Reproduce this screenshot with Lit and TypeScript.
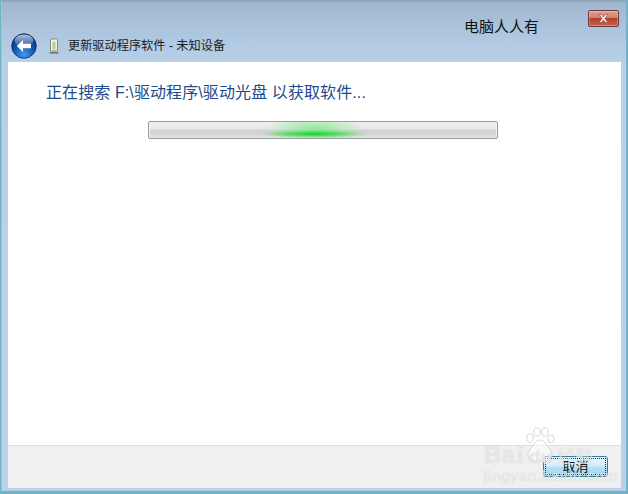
import { LitElement, html, css } from "lit";
import { customElement } from "lit/decorators.js";

@customElement("app-root")
export class AppRoot extends LitElement {
  static styles = css`
    :host {
      display: block;
      width: 628px;
      height: 494px;
      overflow: hidden;
      font-family: "Liberation Sans", "Noto Sans CJK SC", sans-serif;
      background: #6fb3c6;
    }
    .window {
      position: relative;
      box-sizing: border-box;
      width: 625px;
      height: 491px;
      margin-left: 1px;
      border-left: 1px solid #a9c2da;
      border-top: 2px solid #8fa6bb;
      padding: 0 5px 3px 6px;
      display: flex;
      flex-direction: column;
      background: linear-gradient(180deg, #a0b6cd 0, #adc6df 30px, #b8d0e8 62px, #b9d2ea 100%);
    }
    .chrome {
      height: 60px;
      flex: none;
      display: flex;
      flex-direction: column;
    }
    .topline {
      height: 31px;
      display: flex;
      justify-content: flex-end;
      align-items: flex-start;
    }
    .owner {
      font-size: 15px;
      line-height: 18px;
      color: #111;
      margin-top: 16px;
      margin-right: 49px;
    }
    .close {
      box-sizing: border-box;
      width: 31px;
      height: 17px;
      margin-top: 8px;
      margin-right: 2px;
      border: 1px solid #6e3a36;
      border-radius: 2px;
      background: linear-gradient(180deg, #dca092 0, #cf8072 45%, #b4402c 50%, #c9604a 100%);
      display: flex;
      align-items: center;
      justify-content: center;
      box-shadow: inset 0 0 0 1px rgba(255, 255, 255, 0.25);
    }
    .nav {
      display: flex;
      align-items: center;
      height: 25px;
      padding-left: 3px;
    }
    .back {
      width: 26px;
      height: 26px;
      flex: none;
      display: block;
    }
    .dev {
      width: 12px;
      height: 16px;
      margin-left: 11px;
      flex: none;
      display: block;
    }
    .wtitle {
      font-size: 12.2px;
      color: #1c1c1c;
      margin-left: 8px;
      line-height: 16px;
    }
    .body {
      flex: 1;
      min-height: 0;
      background: #fff;
      display: flex;
      flex-direction: column;
    }
    .main {
      flex: 1;
      padding: 21px 0 0 38px;
    }
    .heading {
      font-size: 16px;
      line-height: 20px;
      color: #1d4a8c;
      letter-spacing: 0.1px;
    }
    .bar {
      box-sizing: border-box;
      position: relative;
      overflow: hidden;
      width: 350px;
      height: 18px;
      margin: 18px 0 0 102px;
      border: 1px solid #9a9a9a;
      border-radius: 2px;
      background: linear-gradient(180deg, #eeeeee 0, #e8e8e8 45%, #d0d0d0 50%, #d4d4d4 72%, #e4e4e4 100%);
      box-shadow: inset 1px 0 0 #f2f2f2, inset -1px 0 0 #f2f2f2;
    }
    .glow-top {
      position: absolute;
      left: 116px;
      top: 0;
      width: 100px;
      height: 16px;
      background: radial-gradient(ellipse 50% 85% at 50% 45%, rgba(130, 235, 140, 0.9), rgba(130, 235, 140, 0) 100%);
    }
    .glow-core {
      position: absolute;
      left: 110px;
      top: 8px;
      width: 110px;
      height: 8px;
      background: radial-gradient(ellipse 50% 50% at 50% 50%, #0fd82a 0, rgba(40, 215, 60, 0.75) 35%, rgba(40, 215, 60, 0) 100%);
    }
    .footer {
      flex: none;
      height: 43px;
      box-sizing: border-box;
      background: #f0f0f0;
      border-top: 1px solid #dfdfdf;
      display: flex;
      justify-content: flex-end;
      align-items: flex-start;
      padding: 10px 13px 0 0;
    }
    .cancel {
      box-sizing: border-box;
      width: 65px;
      height: 21px;
      border: 1px solid #2d7f9e;
      border-radius: 3px;
      background: linear-gradient(180deg, #e8f6fd 0, #d4eefb 45%, #b4e0f6 55%, #a5d7f1 100%);
      font: 13px/17px "Liberation Sans", "Noto Sans CJK SC", sans-serif;
      color: #111;
      padding: 0;
      outline: 1px dotted #222;
      outline-offset: -3px;
    }
    .wm {
      position: absolute;
      left: 480px;
      top: 424px;
      width: 125px;
      height: 60px;
      color: rgba(255, 255, 255, 0.55);
      text-shadow: 0 0 1px rgba(170, 170, 170, 0.55);
      pointer-events: none;
    }
    .wm-logo {
      position: absolute;
      left: 2px;
      top: 16px;
      font: bold 24px/26px "Liberation Sans", sans-serif;
      letter-spacing: 1px;
      white-space: nowrap;
    }
    .wm-du {
      position: absolute;
      left: 47px;
      top: 21px;
      font: bold 19px/20px "Liberation Sans", sans-serif;
      white-space: nowrap;
    }
    .wm-jy {
      position: absolute;
      left: 75px;
      top: 19px;
      font: 18px/20px "Noto Sans CJK SC", sans-serif;
      white-space: nowrap;
    }
    .wm-url {
      position: absolute;
      left: 2px;
      top: 42px;
      font: 15px/16px "Liberation Sans", sans-serif;
      letter-spacing: 0.75px;
      white-space: nowrap;
    }
    .wm-paw {
      position: absolute;
      left: 41px;
      top: 1px;
      width: 34px;
      height: 38px;
      display: block;
    }
  `;

  render() {
    return html`
      <div class="window">
        <div class="chrome">
          <div class="topline">
            <span class="owner">电脑人人有</span>
            <span class="close">
              <svg width="15" height="11" viewBox="0 0 15 11">
                <path d="M3 1.500h2.600L7.500 4l1.900-2.500H12L9 5.500l3 4H9.400L7.500 7 5.600 9.500H3l3-4z" fill="#f4ece4" stroke="#8a4a3c" stroke-width=".6" />
              </svg>
            </span>
          </div>
          <div class="nav">
            <svg class="back" viewBox="0 0 26 26">
              <defs>
                <radialGradient id="bg" cx="50%" cy="85%" r="75%">
                  <stop offset="0" stop-color="#3f9be8" />
                  <stop offset=".55" stop-color="#1257b4" />
                  <stop offset="1" stop-color="#0a2f78" />
                </radialGradient>
                <linearGradient id="gl" x1="0" y1="0" x2="0" y2="1">
                  <stop offset="0" stop-color="#fff" stop-opacity=".7" />
                  <stop offset="1" stop-color="#fff" stop-opacity=".08" />
                </linearGradient>
              </defs>
              <circle cx="13" cy="13" r="12.3" fill="url(#bg)" stroke="#0d3270" stroke-width=".8" />
              <ellipse cx="13" cy="7.6" rx="9.5" ry="6" fill="url(#gl)" />
              <path d="M5.8 13l6.2-6v3.7h8v4.6h-8V19z" fill="#fff" />
            </svg>
            <svg class="dev" viewBox="0 0 12 16">
              <rect x="2.5" y="1" width="7" height="12" rx="1" fill="#f1f3ea" stroke="#85877c" />
              <rect x="4.5" y="3.5" width="3" height="8" fill="#b5cf9a" />
              <rect x="1.5" y="14" width="9" height="1.6" fill="#77776f" />
            </svg>
            <span class="wtitle">更新驱动程序软件 - 未知设备</span>
          </div>
        </div>
        <div class="body">
          <div class="main">
            <div class="heading">正在搜索 F:\\驱动程序\\驱动光盘 以获取软件...</div>
            <div class="bar">
              <div class="glow-top"></div>
              <div class="glow-core"></div>
            </div>
          </div>
          <div class="footer">
            <button class="cancel">取消</button>
          </div>
        </div>
        <div class="wm">
          <svg class="wm-paw" viewBox="0 0 32 38">
            <g fill="#fff" fill-opacity=".5" stroke="#d6d6d6" stroke-width="1">
              <ellipse cx="6" cy="11" rx="3.2" ry="4.2" />
              <ellipse cx="13" cy="5" rx="3.2" ry="4.2" />
              <ellipse cx="21" cy="5" rx="3.2" ry="4.2" />
              <ellipse cx="27" cy="12" rx="3" ry="4" />
              <path d="M16 13c-4.500 0-5.500 5-9 8-3 3-4 6-2 10 2 4 6 4 11 3 5 1 9 1 11-3 2-4 1-7-2-10-3.500-3-4.500-8-9-8z" />
            </g>
          </svg>
          <span class="wm-logo">Bai</span>
          <span class="wm-du">du</span>
          <span class="wm-jy">经验</span>
          <span class="wm-url">jingyan.baidu.com</span>
        </div>
      </div>
    `;
  }
}
